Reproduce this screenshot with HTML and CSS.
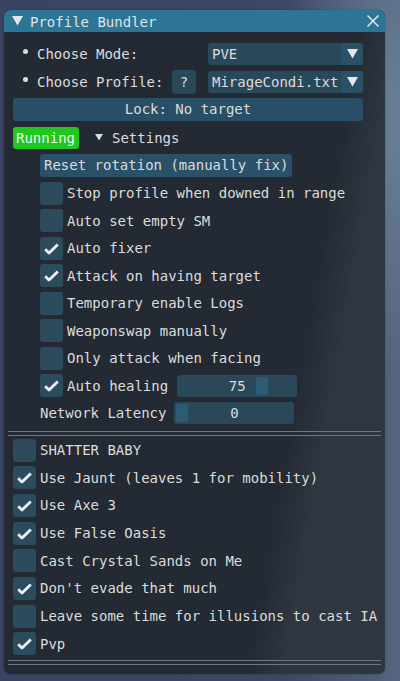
FILE: index.html
```html
<!DOCTYPE html>
<html lang="en">
<head>
    <meta charset="UTF-8">
    <meta name="viewport" content="width=device-width, initial-scale=1.0">
    <title>Profile Bundler</title>
    <link rel="stylesheet" href="styles.css">
</head>
<body>
    <div class="window">
        <!-- Title bar -->
        <div class="titlebar">
            <svg class="title-arrow" width="11" height="10" viewBox="0 0 11 10"><polygon points="0,0 11,0 5.5,9.5" fill="#e4e8ea"/></svg>
            <span class="title-text">Profile Bundler</span>
            <svg class="close" width="14" height="14" viewBox="0 0 14 14"><path d="M1.5 1.5 L12.5 12.5 M12.5 1.5 L1.5 12.5" stroke="#dfe3e6" stroke-width="1.6" fill="none"/></svg>
        </div>

        <div class="content">
            <div class="top">
                <div class="row">
                    <span class="bullet"></span>
                    <span class="label">Choose Mode:</span>
                    <div class="combo">
                        <span class="combo-value">PVE</span>
                        <span class="combo-arrow"><svg width="11" height="10" viewBox="0 0 11 10"><polygon points="0,0 11,0 5.5,9.5" fill="#e4e8ea"/></svg></span>
                    </div>
                </div>
                <div class="row">
                    <span class="bullet"></span>
                    <span class="label">Choose Profile:</span>
                    <span class="help">?</span>
                    <div class="combo">
                        <span class="combo-value">MirageCondi.txt</span>
                        <span class="combo-arrow"><svg width="11" height="10" viewBox="0 0 11 10"><polygon points="0,0 11,0 5.5,9.5" fill="#e4e8ea"/></svg></span>
                    </div>
                </div>
                <div class="btn lock">Lock: No target</div>
                <div class="row">
                    <span class="running">Running</span>
                    <svg class="tree-arrow" width="8" height="7" viewBox="0 0 8 7"><polygon points="0,0 8,0 4,6.5" fill="#dcdfe2"/></svg>
                    <span class="label">Settings</span>
                </div>

                <!-- Settings tree -->
                <div class="tree">
                    <div class="btn reset">Reset rotation (manually fix)</div>
                    <div class="row"><span class="check"></span><span class="label">Stop profile when downed in range</span></div>
                    <div class="row"><span class="check"></span><span class="label">Auto set empty SM</span></div>
                    <div class="row"><span class="check"><svg class="tick" width="15" height="12" viewBox="0 0 15 12"><polyline points="1.2,6.2 5,10 13.8,1.4"/></svg></span><span class="label">Auto fixer</span></div>
                    <div class="row"><span class="check"><svg class="tick" width="15" height="12" viewBox="0 0 15 12"><polyline points="1.2,6.2 5,10 13.8,1.4"/></svg></span><span class="label">Attack on having target</span></div>
                    <div class="row"><span class="check"></span><span class="label">Temporary enable Logs</span></div>
                    <div class="row"><span class="check"></span><span class="label">Weaponswap manually</span></div>
                    <div class="row"><span class="check"></span><span class="label">Only attack when facing</span></div>
                    <div class="row">
                        <span class="check"><svg class="tick" width="15" height="12" viewBox="0 0 15 12"><polyline points="1.2,6.2 5,10 13.8,1.4"/></svg></span><span class="label">Auto healing</span>
                        <div class="slider heal"><span class="grab" style="left: 79px"></span><span class="slider-value">75</span></div>
                    </div>
                    <div class="row">
                        <span class="plain">Network Latency</span>
                        <div class="slider latency"><span class="grab" style="left: 2px"></span><span class="slider-value">0</span></div>
                    </div>
                </div>
            </div>

            <div class="separator first"></div>
            <div class="separator"></div>

            <div class="list">
                <div class="row"><span class="check"></span><span class="label">SHATTER BABY</span></div>
                <div class="row"><span class="check"><svg class="tick" width="15" height="12" viewBox="0 0 15 12"><polyline points="1.2,6.2 5,10 13.8,1.4"/></svg></span><span class="label">Use Jaunt (leaves 1 for mobility)</span></div>
                <div class="row"><span class="check"><svg class="tick" width="15" height="12" viewBox="0 0 15 12"><polyline points="1.2,6.2 5,10 13.8,1.4"/></svg></span><span class="label">Use Axe 3</span></div>
                <div class="row"><span class="check"><svg class="tick" width="15" height="12" viewBox="0 0 15 12"><polyline points="1.2,6.2 5,10 13.8,1.4"/></svg></span><span class="label">Use False Oasis</span></div>
                <div class="row"><span class="check"></span><span class="label">Cast Crystal Sands on Me</span></div>
                <div class="row"><span class="check"><svg class="tick" width="15" height="12" viewBox="0 0 15 12"><polyline points="1.2,6.2 5,10 13.8,1.4"/></svg></span><span class="label">Don't evade that much</span></div>
                <div class="row"><span class="check"></span><span class="label">Leave some time for illusions to cast IA</span></div>
                <div class="row"><span class="check"><svg class="tick" width="15" height="12" viewBox="0 0 15 12"><polyline points="1.2,6.2 5,10 13.8,1.4"/></svg></span><span class="label">Pvp</span></div>
            </div>

            <div class="separator last"></div>
            <div class="separator"></div>
        </div>
    </div>
</body>
</html>
```

FILE: styles.css
```css
body {
    margin: 0;
    width: 400px;
    height: 681px;
    overflow: hidden;
    font-family: "DejaVu Sans Mono", "Liberation Mono", monospace;
    font-size: 14px;
    color: #dcdcdc;
    background:
        radial-gradient(ellipse 120px 260px at 400px 120px, #6a7f97 0%, rgba(106,127,151,0) 100%),
        linear-gradient(90deg, #3a4361 0%, #3d4664 70%, #55647f 100%);
    background-color: #3a4361;
}
.window {
    margin: 10px 0 0 4px;
    width: 381px;
    height: 664px;
    border-radius: 7px;
    overflow: hidden;
    background:
        linear-gradient(100deg, rgba(35,42,51,0) 72%, rgba(48,56,66,0.9) 80%),
        #232a33;
    box-shadow: 0 0 2px rgba(0, 0, 0, 0.3);
}
.titlebar {
    height: 22px;
    background-color: #2c7595;
    display: flex;
    align-items: center;
    padding: 0 4px 0 8px;
    color: #dfe4e7;
}
.title-arrow {
    margin-right: 7px;
}
.title-text {
    flex: 1;
    padding-top: 1px;
}
.close {
    margin-right: 1px;
}
.content {
    padding: 10px 22px 0 9px;
}
.top, .tree, .list {
    display: flex;
    flex-direction: column;
}
.top {
    gap: 5px;
}
.tree {
    gap: 4.5px;
    padding-left: 27px;
}
.list {
    gap: 4.7px;
    margin-top: 3px;
}
.row {
    height: 23px;
    display: flex;
    align-items: center;
    white-space: nowrap;
}
.label {
    margin-left: 4px;
}
.bullet {
    width: 5px;
    height: 5px;
    border-radius: 50%;
    background-color: #dcdcdc;
    margin: 0 9px 4px 10px;
}
.bullet + .label {
    margin-left: 0;
}
.combo {
    margin-left: auto;
    width: 155px;
    height: 22px;
    display: flex;
    background-color: #29485a;
    border-radius: 3px;
    overflow: hidden;
}
.combo-value {
    flex: 1;
    padding-left: 4px;
    line-height: 22px;
}
.combo-arrow {
    width: 22px;
    display: flex;
    align-items: center;
    justify-content: center;
    background-color: #2a5167;
}
.help {
    width: 24px;
    height: 24px;
    line-height: 24px;
    text-align: center;
    background-color: #29485a;
    border-radius: 3px;
    margin-left: auto;
    margin-right: 12px;
}
.help + .combo {
    margin-left: 0;
}
.btn {
    height: 23px;
    line-height: 23px;
    background-color: #294f66;
    border-radius: 3px;
}
.lock {
    text-align: center;
}
.reset {
    align-self: flex-start;
    padding: 0 4px;
    background-color: #2a5168;
}
.running {
    height: 22px;
    line-height: 22px;
    padding: 0 4px 0 3px;
    background-color: #1fc71f;
    border-radius: 3px;
    color: #eef6ee;
}
.tree-arrow {
    margin: 0 5px 1px 16px;
}
.check {
    width: 23px;
    height: 23px;
    flex: none;
    display: flex;
    align-items: center;
    justify-content: center;
    background-color: #2c4b5d;
    border-radius: 3px;
}
.tick {
    margin-top: 1px;
}
.tick polyline {
    fill: none;
    stroke: #eef2f4;
    stroke-width: 2.8;
    stroke-linejoin: round;
}
.plain {
    margin-left: 0;
}
.slider {
    position: relative;
    width: 120px;
    height: 22px;
    line-height: 22px;
    text-align: center;
    background-color: #29485a;
    border-radius: 3px;
}
.heal {
    margin-left: 9px;
}
.latency {
    margin-left: 8px;
}
.grab {
    position: absolute;
    top: 2px;
    width: 12px;
    height: 18px;
    background-color: #2c5b74;
    border-radius: 2px;
}
.slider-value {
    position: relative;
}
.separator {
    height: 1px;
    background-color: #6f7783;
    margin: 3px -18px 0 -5px;
}
.separator.first {
    margin-top: 6px;
}
.separator.last {
    margin-top: 5px;
}
```
